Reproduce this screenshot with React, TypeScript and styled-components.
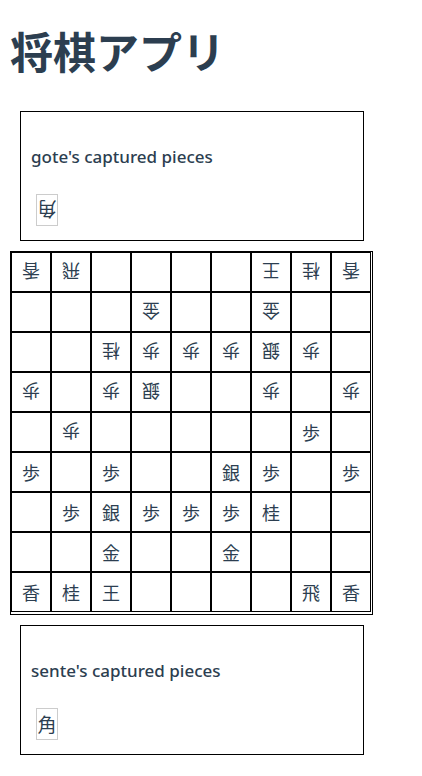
import React from "react";
import styled, { createGlobalStyle } from "styled-components";

const GlobalStyle = createGlobalStyle`
  body {
    margin: 0;
    background: #fff;
    color: #2c3e50;
    font-family: "Noto Sans", "Noto Sans CJK JP", sans-serif;
  }
`;

///--------------------------------------------------------------------
const Page = styled.div`
  display: flex;
  flex-direction: column;
  width: 364px;
  padding-left: 10px;
`;

const Title = styled.h1`
  margin: 24px 0 25px 0;
  font-family: "Noto Sans CJK JP", sans-serif;
  font-size: 43px;
  line-height: 52px;
  font-weight: 700;
  color: #2c3e50;
`;

const CapturedBox = styled.div`
  display: flex;
  flex-direction: column;
  margin: 10px;
  padding: 0 10px;
  border: 1px solid #000;
  height: 130px;
  box-sizing: border-box;
`;

const CapturedTitle = styled.h3`
  margin: 34px 0 26px 0;
  font-size: 17px;
  line-height: 22px;
  font-weight: 500;
`;

const PieceRow = styled.div`
  display: flex;
  gap: 4px;
  padding-left: 5px;
`;

const HandPiece = styled.span<{ $gote?: boolean }>`
  display: inline-block;
  width: 20px;
  height: 30px;
  line-height: 30px;
  border: 1px solid #ccc;
  text-align: center;
  font-family: "Noto Sans CJK JP", sans-serif;
  font-size: 19px;
  transform: ${(p) => (p.$gote ? "rotate(180deg)" : "none")};
`;

const Board = styled.div`
  display: grid;
  grid-template-columns: repeat(9, 40px);
  grid-auto-rows: 40px;
  width: 360px;
  padding: 0 1px 2px 0;
  border: 1px solid #000;
`;

const Cell = styled.div`
  display: flex;
  align-items: center;
  justify-content: center;
  box-sizing: border-box;
  border: 1px solid #000;
  font-family: "Noto Sans CJK JP", sans-serif;
  font-size: 18px;
`;

const Piece = styled.span<{ $gote?: boolean }>`
  display: inline-block;
  transform: ${(p) => (p.$gote ? "rotate(180deg)" : "none")};
`;

////---------------------------------------------------------------

// prefix "v" = gote (upside down), "^" = sente
const layout: string[][] = [
  ["v香", "v飛", "", "", "", "", "v王", "v桂", "v香"],
  ["", "", "", "v金", "", "", "v金", "", ""],
  ["", "", "v桂", "v歩", "v歩", "v歩", "v銀", "v歩", ""],
  ["v歩", "", "v歩", "v銀", "", "", "v歩", "", "v歩"],
  ["", "v歩", "", "", "", "", "", "^歩", ""],
  ["^歩", "", "^歩", "", "", "^銀", "^歩", "", "^歩"],
  ["", "^歩", "^銀", "^歩", "^歩", "^歩", "^桂", "", ""],
  ["", "", "^金", "", "", "^金", "", "", ""],
  ["^香", "^桂", "^王", "", "", "", "", "^飛", "^香"],
];

interface CapturedProps {
  player: string;
  pieces: string[];
  gote?: boolean;
}

const Captured = ({ player, pieces, gote }: CapturedProps) => (
  <CapturedBox>
    <CapturedTitle>{player}'s captured pieces</CapturedTitle>
    <PieceRow>
      {pieces.map((p, i) => (
        <HandPiece key={i} $gote={gote}>
          {p}
        </HandPiece>
      ))}
    </PieceRow>
  </CapturedBox>
);

export default function App() {
  return (
    <>
      <GlobalStyle />
      <Page>
        <Title>将棋アプリ</Title>
        <Captured player="gote" pieces={["角"]} gote />
        <Board>
          {layout.flat().map((c, i) => (
            <Cell key={i}>
              {c && <Piece $gote={c[0] === "v"}>{c.slice(1)}</Piece>}
            </Cell>
          ))}
        </Board>
        <Captured player="sente" pieces={["角"]} />
      </Page>
    </>
  );
}
